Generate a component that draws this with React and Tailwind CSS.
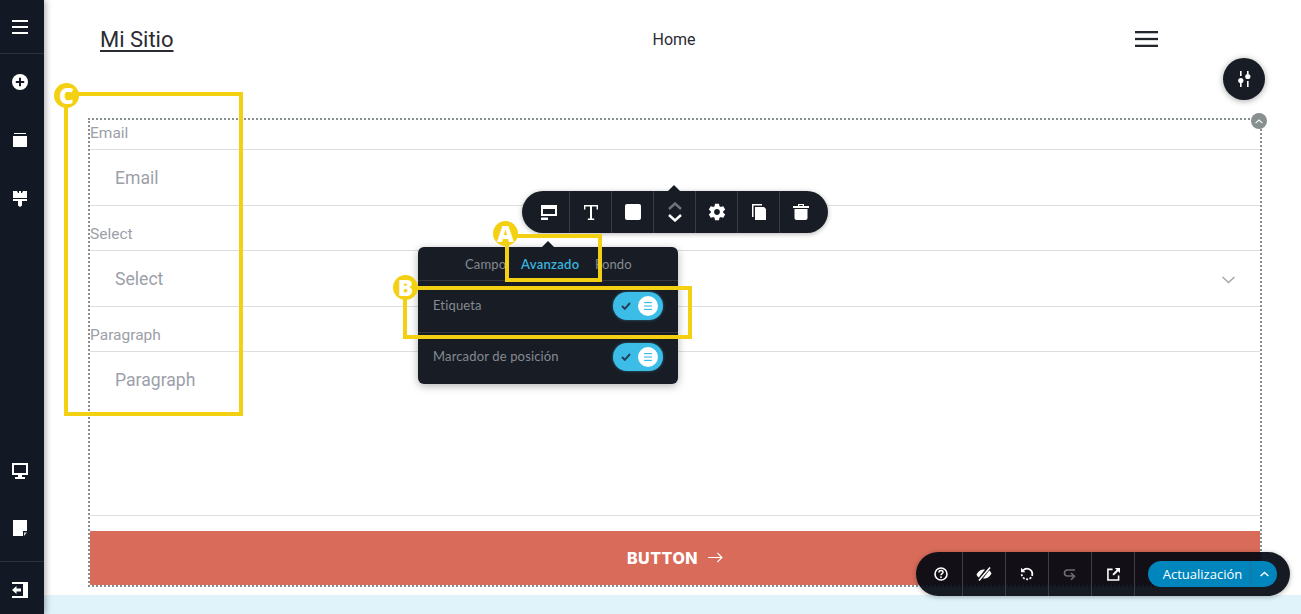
import React from 'react';

const Burger = ({ className }) => (
  <svg viewBox="0 0 16 14" className={className} fill="currentColor" preserveAspectRatio="none">
    <rect x="0" y="0" width="16" height="2" />
    <rect x="0" y="6" width="16" height="2" />
    <rect x="0" y="12" width="16" height="2" />
  </svg>
);

const PlusCircle = () => (
  <svg viewBox="0 0 16 16" className="w-4 h-4" fill="none">
    <circle cx="8" cy="8" r="8" fill="#fff" />
    <path d="M8 3.800v8.400M3.800 8h8.400" stroke="#131924" strokeWidth="2" />
  </svg>
);

const WindowIcon = () => (
  <svg viewBox="0 0 14 14" className="w-[14px] h-[14px]" fill="#fff">
    <rect x="1" y="0" width="12" height="1" />
    <rect x="0" y="3" width="14" height="11" />
  </svg>
);

const BrushIcon = () => (
  <svg viewBox="0 0 14 16" className="w-[14px] h-4" fill="#fff">
    <path d="M0 0h4l1 2h1V0h2v2h1l1-2h4v7H0z" />
    <path d="M0 8h14v2H9v4.500L7 16l-2-1.500V10H0z" />
  </svg>
);

const MonitorIcon = () => (
  <svg viewBox="0 0 16 16" className="w-4 h-4" fill="#fff">
    <path d="M0 0h16v12H0zm2 2v8h12V2z" fillRule="evenodd" />
    <rect x="6" y="12" width="4" height="2" />
    <rect x="3" y="14" width="10" height="2" />
  </svg>
);

const NoteIcon = () => (
  <svg viewBox="0 0 14 16" className="w-[14px] h-4" fill="#fff">
    <path d="M0 0h14v11h-4v5H0z" />
    <path d="M11 12.500h3L11 16z" opacity=".8" />
  </svg>
);

const ExitIcon = () => (
  <svg viewBox="0 0 16 16" className="w-4 h-4" fill="#fff">
    <path d="M0 0h16v16H0v-2h11V2H0z" />
    <path d="M0 8l4.500-4v2.500H9v3H4.500V12z" />
  </svg>
);

const Chevron = ({ up, className, color = '#fff', width = 2 }) => (
  <svg viewBox="0 0 14 8" className={className} fill="none" stroke={color} strokeWidth={width}>
    <path d={up ? 'M1 7l6-5.500L13 7' : 'M1 1l6 5.500L13 1'} />
  </svg>
);

const Sliders = () => (
  <svg viewBox="0 0 14 16" className="w-[14px] h-4" fill="#fff">
    <rect x="3" y="0" width="1.600" height="5" />
    <circle cx="3.800" cy="9.500" r="2.600" />
    <rect x="3" y="12" width="1.600" height="4" />
    <rect x="10" y="0" width="1.600" height="3" />
    <circle cx="10.800" cy="5.500" r="2.600" />
    <rect x="10" y="10" width="1.600" height="6" />
  </svg>
);

const LayoutIcon = () => (
  <svg viewBox="0 0 16 15" className="w-4 h-[15px]" fill="#fff">
    <path d="M0 0h16v11H0zm2 4v5h12V4z" fillRule="evenodd" />
    <rect x="0" y="12.500" width="7" height="2.500" rx=".5" />
  </svg>
);

const SerifT = () => (
  <svg viewBox="0 0 14 15" className="w-[14px] h-[15px]" fill="#fff">
    <path d="M0 0h14v4.500h-1.400V1.600H8v11.800h2.200V15H3.800v-1.600H6V1.600H1.400v2.900H0z" />
  </svg>
);

const GearIcon = () => (
  <svg viewBox="0 0 24 24" className="w-[20px] h-[20px]" fill="#fff">
    <path d="M19.43 12.98c.04-.32.07-.64.07-.98s-.03-.66-.07-.98l2.110-1.650c.190-.150.240-.420.120-.640l-2-3.460c-.120-.220-.390-.300-.610-.220l-2.490 1c-.520-.400-1.080-.730-1.690-.980l-.380-2.650C14.460 2.180 14.250 2 14 2h-4c-.250 0-.460.180-.490.420l-.380 2.650c-.610.250-1.170.590-1.690.980l-2.490-1c-.230-.090-.490 0-.610.220l-2 3.460c-.130.220-.070.490.120.640l2.110 1.650c-.040.320-.070.650-.070.980s.030.660.070.980l-2.110 1.650c-.190.150-.240.420-.120.640l2 3.460c.120.220.390.300.610.220l2.490-1c.520.400 1.080.730 1.690.980l.380 2.650c.030.240.240.420.490.420h4c.250 0 .460-.180.490-.420l.380-2.650c.610-.250 1.170-.590 1.690-.980l2.490 1c.230.090.490 0 .610-.220l2-3.460c.120-.220.070-.490-.120-.640l-2.110-1.650zM12 15.500c-1.930 0-3.500-1.570-3.500-3.500s1.570-3.500 3.500-3.500 3.500 1.570 3.500 3.500-1.570 3.500-3.500 3.500z" />
  </svg>
);

const CopyIcon = () => (
  <svg viewBox="0 0 14 16" className="w-[14px] h-4" fill="#fff">
    <path d="M0 0h10v1.500H1.500V13H0z" />
    <path d="M3 3h9l2 2v11H3z" />
  </svg>
);

const TrashIcon = () => (
  <svg viewBox="0 0 16 16" className="w-4 h-4" fill="#fff">
    <path d="M5 0h6v2h5v2H0V2h5zm1.300 1v1h3.400V1z" fillRule="evenodd" />
    <path d="M1.500 5h13v9c0 1.100-.900 2-2 2h-9c-1.100 0-2-.900-2-2z" />
  </svg>
);

const HelpIcon = () => (
  <svg viewBox="0 0 14 14" className="w-[14px] h-[14px]" fill="none">
    <circle cx="7" cy="7" r="6" stroke="#fff" strokeWidth="1.600" />
    <path d="M5 5.400C5 4.200 6 3.600 7 3.600s2 .700 2 1.700c0 1.400-2 1.400-2 3" stroke="#fff" strokeWidth="1.500" />
    <rect x="6.200" y="9.400" width="1.600" height="1.600" fill="#fff" />
  </svg>
);

const EyeOff = () => (
  <svg viewBox="0 0 16 14" className="w-4 h-[14px]" fill="none">
    <path d="M0.500 7.500C3 3 6.500 2.200 9 2.600L2.800 10.600C1.800 9.800 1 8.800.5 7.500z" fill="#fff" />
    <path d="M15.500 6.500C13 11 9.500 11.800 7 11.400L13.200 3.400c1 .800 1.800 1.800 2.300 3.100z" fill="#fff" />
    <path d="M14 .5L3 13.500" stroke="#fff" strokeWidth="1.600" />
  </svg>
);

const UndoIcon = () => (
  <svg viewBox="0 0 14 14" className="w-[14px] h-[14px]" fill="none">
    <path d="M3 3.500A5.300 5.300 0 0 1 12.300 7" stroke="#fff" strokeWidth="1.800" />
    <path d="M12.300 7a5.300 5.300 0 0 1-10.600 0" stroke="#fff" strokeWidth="1.800" strokeDasharray="2 1.500" />
    <path d="M1 0.800v4.400h4.400z" fill="#fff" />
  </svg>
);

const RedoIcon = () => (
  <svg viewBox="0 0 14 14" className="w-[14px] h-[14px]" fill="none" stroke="#6b6e73" strokeWidth="1.600">
    <path d="M12 3H4.500a3 3 0 0 0 0 6H10" />
    <path d="M8 6l3.500 3.300L8 12.800" />
  </svg>
);

const ShareIcon = () => (
  <svg viewBox="0 0 14 14" className="w-[13px] h-[13px]" fill="none">
    <path d="M6 1.500H1v11.500h11.500V8" stroke="#fff" strokeWidth="1.700" />
    <path d="M8.500 0H14v5.500L12 3.600 7.300 8.200 5.800 6.700 10.400 2z" fill="#fff" />
  </svg>
);

const Notch = ({ className }) => (
  <div className={`absolute w-0 h-0 border-x-[6px] border-b-[6px] border-x-transparent border-b-[#181d25] ${className}`} />
);

const Toggle = () => (
  <div className="w-[50px] h-[28px] rounded-full bg-[#3cbde8] shadow-[0_0_3px_rgba(60,189,232,0.5)] flex items-center pl-[8px] pr-[5px] justify-between">
    <svg viewBox="0 0 10 8" className="w-[10px] h-2" fill="none" stroke="#25405a" strokeWidth="2">
      <path d="M1 4l2.800 2.800L9 1" />
    </svg>
    <div className="w-5 h-5 rounded-full bg-white flex items-center justify-center">
      <Burger className="w-2 h-2 text-[#3cbde8]" />
    </div>
  </div>
);

const Callout = ({ letter, className }) => (
  <div className={`absolute w-[25px] h-[25px] rounded-full bg-[#f4d013] text-white font-extrabold text-[23px] leading-[25px] text-center font-['Open_Sans',sans-serif] ${className}`}>
    {letter}
  </div>
);

const toolbarIcons = [
  <LayoutIcon key="layout" />,
  <SerifT key="text" />,
  <div key="fill" className="w-4 h-4 rounded-[2px] bg-white" />,
  <div key="arrows" className="flex flex-col gap-[4px] items-center">
    <Chevron up className="w-[14px] h-2" color="#6f747b" width={2.4} />
    <Chevron className="w-[14px] h-2" width={2.4} />
  </div>,
  <GearIcon key="gear" />,
  <CopyIcon key="copy" />,
  <TrashIcon key="trash" />,
];

const bottomIcons = [
  <HelpIcon key="help" />,
  <EyeOff key="eye" />,
  <UndoIcon key="undo" />,
  <RedoIcon key="redo" />,
  <ShareIcon key="share" />,
];

const sideCell = "pr-1 flex items-center justify-center";
const fieldLabel = "border-b border-[#dedede] text-[15.5px] leading-[22px] pt-px pb-[5px] text-[#9ca0a8]";
const fieldBody = "border-b border-[#dedede] h-[56px] pl-[25px] pt-[2px] flex items-center text-[17.6px] text-[#9ca0a8]";

export default function App() {
  return (
    <div className="relative w-[1301px] h-[614px] overflow-hidden bg-white flex font-['Roboto',sans-serif]">
      <aside className="w-[44px] h-full bg-[#131924] shrink-0 z-10 flex flex-col shadow-[2px_0_6px_rgba(0,0,0,0.3)]">
        <div className={`h-[54px] border-b border-[#2a303b] ${sideCell}`}>
          <Burger className="w-4 h-[14px] text-white" />
        </div>
        <div className="flex flex-col">
          <div className={`h-[56px] ${sideCell}`}><PlusCircle /></div>
          <div className={`h-[60px] ${sideCell}`}><WindowIcon /></div>
          <div className={`h-[58px] ${sideCell}`}><BrushIcon /></div>
        </div>
        <div className="mt-auto flex flex-col">
          <div className={`h-[58px] ${sideCell}`}><MonitorIcon /></div>
          <div className={`h-[61px] pb-[6px] ${sideCell}`}><NoteIcon /></div>
          <div className={`h-[53px] pt-[3px] border-t border-[#2a303b] ${sideCell}`}><ExitIcon /></div>
        </div>
      </aside>

      <main className="flex-1 flex flex-col min-w-0">
        <header className="h-[78px] pl-[56px] pr-[143px] flex items-center text-[#2a2c33]">
          <a className="text-[22px] underline underline-offset-[3px] decoration-2">Mi Sitio</a>
          <span className="text-[16px] ml-[479px] pt-[2px]">Home</span>
          <Burger className="w-[23px] h-4 ml-auto text-[#23252c]" />
        </header>

        <form className="mt-[40px] ml-[44px] w-[1174px] h-[469px] border-2 border-dotted border-[#87908f] pt-px">
          <div className={fieldLabel}>Email</div>
          <div className={fieldBody}>Email</div>
          <div className={`${fieldLabel} mt-4`}>Select</div>
          <div className={`${fieldBody} justify-between pr-[24px]`}>
            Select
            <Chevron className="w-[15px] h-[8px]" color="#a3a7ad" width={1.5} />
          </div>
          <div className={`${fieldLabel} mt-4`}>Paragraph</div>
          <div className="border-b border-[#dedede] h-[164px] pl-[25px] pt-4 text-[17.6px] leading-6 text-[#9ca0a8]">Paragraph</div>
          <button type="button" className="mt-[15px] pb-px w-full h-[54px] bg-[#d96b5a] text-white font-extrabold text-[16px] tracking-[0.5px] flex items-center justify-center gap-[10px] font-['Inter',sans-serif]">
            BUTTON
            <svg viewBox="0 0 16 12" className="w-[15px] h-[11px]" fill="none" stroke="#fff" strokeWidth="1.300">
              <path d="M0 6h15M10 1l5 5-5 5" />
            </svg>
          </button>
        </form>

        <div className="mt-2 flex-1 bg-[#e0f3fb]" />
      </main>

      {/* floating editor controls */}
      <button type="button" className="absolute left-[1223px] top-[58px] w-[42px] h-[42px] rounded-full bg-[#181d25] flex items-center justify-center shadow-[0_1px_6px_rgba(0,0,0,0.35)]">
        <Sliders />
      </button>
      <div className="absolute left-[1251px] top-[113px] w-4 h-4 rounded-full bg-[#87908f] flex items-center justify-center">
        <Chevron up className="w-2 h-[5px]" width={1.8} />
      </div>

      <Notch className="left-[668px] top-[185px]" />
      <div className="absolute left-[522px] top-[191px] w-[306px] h-[42px] rounded-full bg-[#181d25] flex shadow-[0_1px_5px_rgba(0,0,0,0.3)]">
        {toolbarIcons.map((icon, index) => (
          <div
            key={index}
            className={`h-full flex items-center justify-center border-[#383d45] ${index === 0 ? 'w-[48px] pl-[6px] border-r' : index === 6 ? 'w-[48px] pr-[6px]' : 'w-[42px] border-r'}`}
          >
            {icon}
          </div>
        ))}
      </div>

      <Notch className="left-[542px] top-[241px]" />
      <div className="absolute left-[418px] top-[247px] w-[260px] h-[137px] rounded-md bg-[#181d25] shadow-[0_2px_8px_rgba(0,0,0,0.3)] font-['Lato',sans-serif] text-[13px] tracking-[0.15px] text-[#858a92]">
        <div className="relative h-[34px] border-b border-[#33383f]">
          <span className="absolute left-[47px] top-[8px]">Campo</span>
          <span className="absolute left-[103px] top-[8px] text-[#38b3dd] font-semibold tracking-[0.3px]">Avanzado</span>
          <span className="absolute left-[177px] top-[8px]">Fondo</span>
        </div>
        <div className="h-[52px] border-b border-[#33383f] pl-[15px] pr-[15px] pt-[11px] flex items-start justify-between">
          <span className="leading-[26px]">Etiqueta</span>
          <Toggle />
        </div>
        <div className="pl-[15px] pr-[15px] pt-[10px] flex items-start justify-between">
          <span className="leading-[26px]">Marcador de posición</span>
          <Toggle />
        </div>
      </div>

      <div className="absolute left-[916px] top-[552px] w-[374px] h-[44px] rounded-full bg-[rgba(2,8,16,0.92)] flex items-center shadow-[0_1px_5px_rgba(0,0,0,0.3)]">
        {bottomIcons.map((icon, index) => (
          <div
            key={index}
            className={`h-full flex items-center justify-center border-r border-[#3a3e45] ${index === 0 ? 'w-[47px] pl-[3px]' : 'w-[43px]'}`}
          >
            {icon}
          </div>
        ))}
        <div className="ml-[13px] w-[129px] h-[26px] rounded-full bg-[#0085bd] flex items-center text-white text-[13px] font-['Open_Sans',sans-serif]">
          <span className="w-[103px] pl-[7px] text-center border-r border-[#2b6f93] leading-[26px]">Actualización</span>
          <span className="flex-1 flex items-center justify-center">
            <Chevron up className="w-[9px] h-[6px]" width={2.2} />
          </span>
        </div>
      </div>

      {/* yellow annotation boxes */}
      <div className="absolute left-[64px] top-[92px] w-[179px] h-[324px] border-4 border-[#f4d013]" />
      <Callout letter="C" className="left-[54px] top-[83px]" />
      <div className="absolute left-[505px] top-[234px] w-[97px] h-[48px] border-4 border-[#f4d013]" />
      <Callout letter="A" className="left-[493px] top-[221px]" />
      <div className="absolute left-[403px] top-[286px] w-[289px] h-[53px] border-4 border-[#f4d013]" />
      <Callout letter="B" className="left-[393px] top-[275px]" />
    </div>
  );
}
